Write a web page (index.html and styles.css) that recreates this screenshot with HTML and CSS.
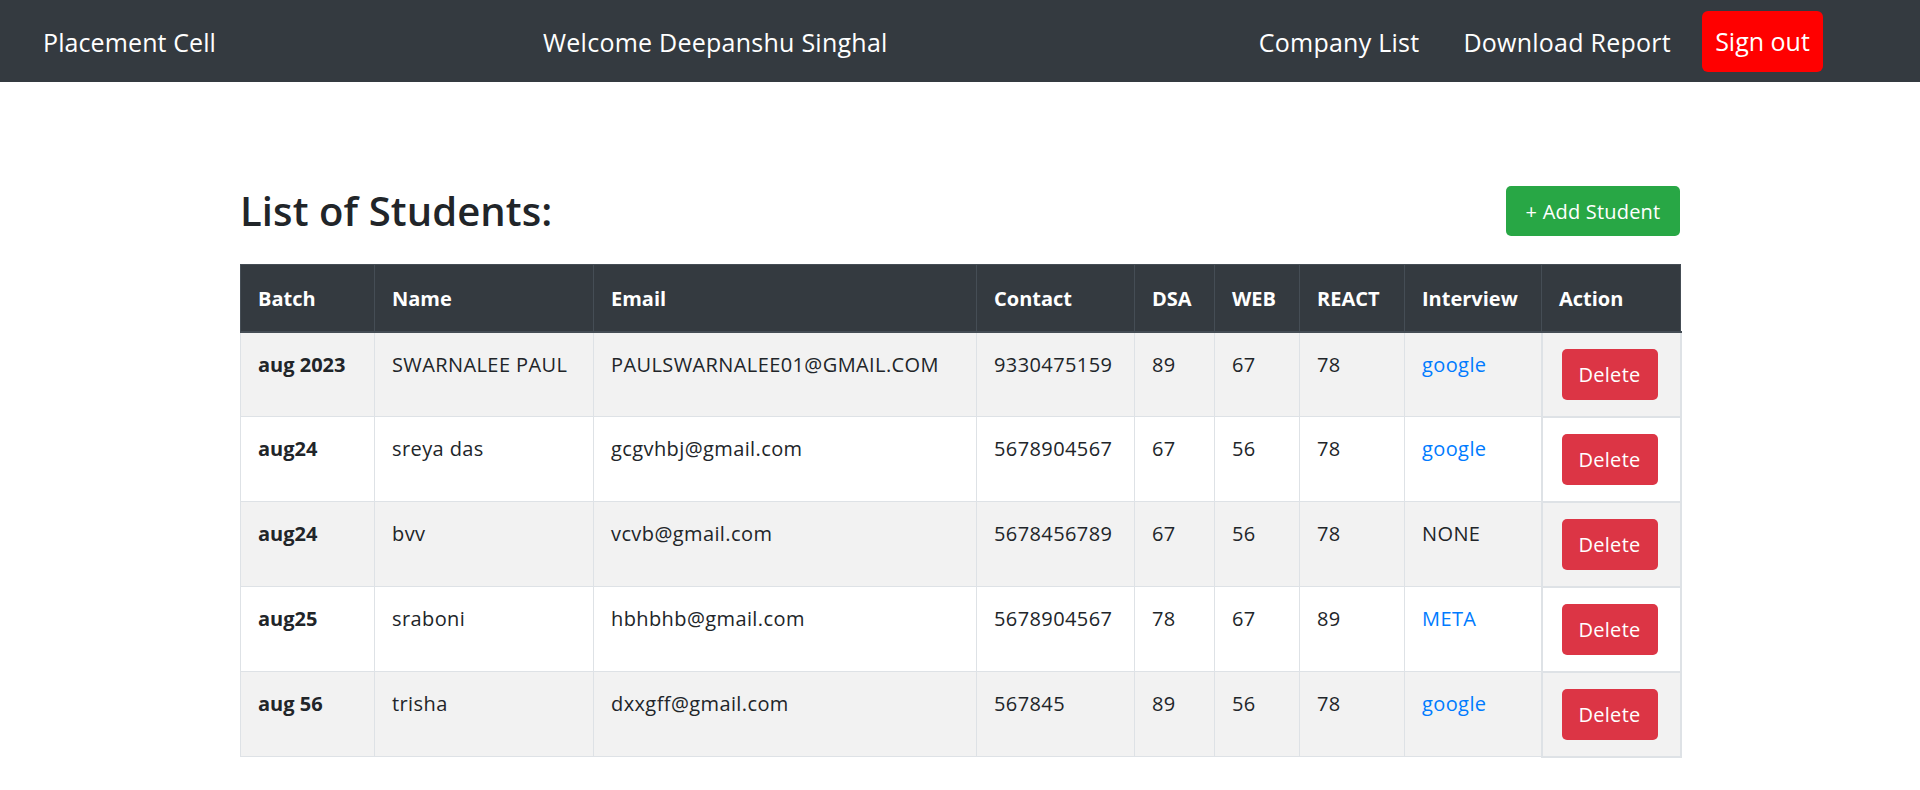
FILE: index.html
```html
<!DOCTYPE html>
<html lang="en">
<head>
<meta charset="utf-8">
<title>Placement Cell</title>
<link rel="stylesheet" href="styles.css">
</head>
<body>
<nav class="navbar">
  <a class="brand" href="#">Placement Cell</a>
  <span class="welcome">Welcome Deepanshu Singhal</span>
  <div class="nav-right">
    <a class="nav-link" href="#">Company List</a>
    <a class="nav-link" href="#">Download Report</a>
    <a class="btn-signout" href="#">Sign out</a>
  </div>
</nav>
<main class="content">
  <div class="title-row">
    <h2 class="title">List of Students:</h2>
    <a class="btn-add" href="#">+ Add Student</a>
  </div>
  <table class="students">
    <colgroup>
      <col class="c-batch"><col class="c-name"><col class="c-email"><col class="c-contact"><col class="c-dsa"><col class="c-web"><col class="c-react"><col class="c-int"><col class="c-act">
    </colgroup>
    <thead>
      <tr><th>Batch</th><th>Name</th><th>Email</th><th>Contact</th><th>DSA</th><th>WEB</th><th>REACT</th><th>Interview</th><th>Action</th></tr>
    </thead>
    <tbody>
      <tr><th>aug 2023</th><td>SWARNALEE PAUL</td><td>PAULSWARNALEE01@GMAIL.COM</td><td>9330475159</td><td>89</td><td>67</td><td>78</td><td><a class="link" href="#">google</a></td><td class="act"><button class="btn-del">Delete</button></td></tr>
      <tr><th>aug24</th><td>sreya das</td><td>gcgvhbj@gmail.com</td><td>5678904567</td><td>67</td><td>56</td><td>78</td><td><a class="link" href="#">google</a></td><td class="act"><button class="btn-del">Delete</button></td></tr>
      <tr><th>aug24</th><td>bvv</td><td>vcvb@gmail.com</td><td>5678456789</td><td>67</td><td>56</td><td>78</td><td>NONE</td><td class="act"><button class="btn-del">Delete</button></td></tr>
      <tr><th>aug25</th><td>sraboni</td><td>hbhbhb@gmail.com</td><td>5678904567</td><td>78</td><td>67</td><td>89</td><td><a class="link" href="#">META</a></td><td class="act"><button class="btn-del">Delete</button></td></tr>
      <tr><th>aug 56</th><td>trisha</td><td>dxxgff@gmail.com</td><td>567845</td><td>89</td><td>56</td><td>78</td><td><a class="link" href="#">google</a></td><td class="act"><button class="btn-del">Delete</button></td></tr>
    </tbody>
  </table>
</main>
</body>
</html>
```

FILE: styles.css
```css
* { box-sizing: border-box; }
html, body { margin: 0; padding: 0; }
body {
  font-family: "Open Sans", "Noto Sans", "Liberation Sans", sans-serif;
  color: #212529;
  background: #fff;
  font-size: 20px;
}
a { text-decoration: none; }

.navbar {
  height: 82px;
  background: #343a40;
  display: flex;
  align-items: center;
  padding: 2px 97px 0 43px;
  font-size: 25px;
  line-height: 36px;
}
.brand { color: #fff; letter-spacing: 0.1px; }
.welcome { color: #fff; margin-left: 327px; letter-spacing: 0.25px; }
.nav-right { margin-left: auto; display: flex; align-items: center; }
.nav-link { color: #fff; margin-right: 44px; letter-spacing: 0.25px; }
.nav-link:nth-child(2) { margin-right: 31px; }
.btn-signout {
  display: flex;
  align-items: center;
  justify-content: center;
  height: 61px;
  width: 121px;
  margin-top: -2px;
  background: #ff0000;
  color: #fff;
  border-radius: 6px;
}

.content { width: 1440px; margin: 0 auto; padding-top: 104px; }
.title-row { display: flex; justify-content: space-between; align-items: center; height: 50px; margin-bottom: 28px; }
.title { margin: 0; font-size: 40px; font-weight: 600; line-height: 48px; letter-spacing: 0.1px; }
.btn-add {
  display: flex;
  align-items: center;
  justify-content: center;
  width: 174px;
  height: 50px;
  background: #28a745;
  color: #fff;
  border-radius: 5px;
  font-size: 20px;
  letter-spacing: 0.2px;
}

.students {
  width: 1440px;
  table-layout: fixed;
  border-collapse: collapse;
  border: 1px solid #dee2e6;
}
.c-batch { width: 134px; }
.c-name { width: 219px; }
.c-email { width: 383px; }
.c-contact { width: 158px; }
.c-dsa { width: 80px; }
.c-web { width: 85px; }
.c-react { width: 105px; }
.c-int { width: 137px; }
.c-act { width: 139px; }

.students th, .students td {
  text-align: left;
  vertical-align: top;
  line-height: 30px;
  padding: 17px 17px 13px;
  border: 1px solid #dee2e6;
  white-space: nowrap;
}
.students td { letter-spacing: 0.4px; }
.students thead th {
  background: #343a40;
  color: #fff;
  border-color: #454d55;
  border-bottom: 2px solid #454d55;
  padding: 19px 17px 16px;
  font-weight: 700;
  height: 67px;
  letter-spacing: 0;
}
.students tbody th { font-weight: 700; }
.students tbody tr { height: 85px; }
.students tbody tr:nth-child(odd) { background: #f2f2f2; }
.students td.act { padding: 16px 19px; border-width: 2px; letter-spacing: 0; }
.link { color: #007bff; }
.btn-del {
  display: flex;
  align-items: center;
  justify-content: center;
  width: 96px;
  height: 51px;
  border: none;
  border-radius: 5px;
  background: #dc3545;
  color: #fff;
  font-family: inherit;
  font-size: 20px;
  letter-spacing: 0.3px;
  padding: 0;
}
```
